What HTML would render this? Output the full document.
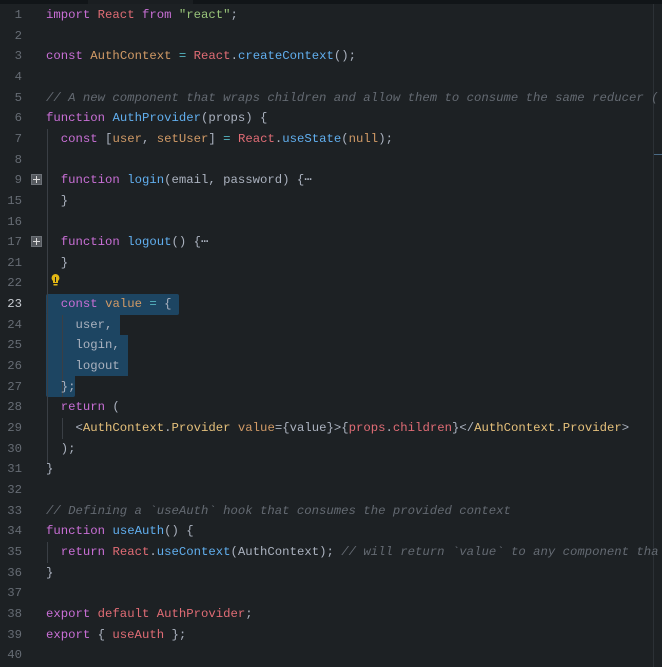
<!DOCTYPE html>
<html><head><style>
html,body{margin:0;padding:0;background:#1d2124;width:662px;height:667px;overflow:hidden}
body{position:relative;font-family:"Liberation Mono","DejaVu Sans Mono",monospace;font-size:12.3px;color:#abb2bf}
.top{position:absolute;left:0;top:0;width:662px;height:4px;background:#111518}
.top2{position:absolute;left:88px;top:0;width:105px;height:4px;background:#1a1e21}
.r{position:absolute;left:0;height:20.65px;line-height:20.65px;white-space:pre;width:662px}
.n{position:absolute;left:0;width:22px;text-align:right;color:#666c74}
.c{position:absolute;left:46px}
.k{color:#c96fd6}.v{color:#e06c75}.o{color:#d19a66}.f{color:#61afef}.s{color:#98c379}.cm{color:#646a72;font-style:italic}.y{color:#e5c07b}.op{color:#56b6c2}
.sel{position:absolute;background:#1d4562}
.g{position:absolute;width:1px;background:#3a3f45}
.fold{position:absolute;left:31px;width:11px;height:11px;background:#55595e;border:1px solid #6d7278;box-sizing:border-box}
.fold:before{content:"";position:absolute;left:1px;top:4px;width:7px;height:1px;background:#dcdcdc}
.fold:after{content:"";position:absolute;left:4px;top:1px;width:1px;height:7px;background:#dcdcdc}
</style></head><body>
<div class="top"></div><div class="top2"></div>
<div style="position:absolute;left:653px;top:4px;width:1px;height:663px;background:#2c3136"></div>
<div style="position:absolute;left:654px;top:154px;width:8px;height:1px;background:#4a6a85"></div>
<div class="sel" style="left:46px;top:294px;width:133px;height:20.65px;border-radius:2px"></div>
<div class="sel" style="left:46px;top:314px;width:74px;height:21px"></div>
<div class="sel" style="left:46px;top:335px;width:82px;height:41px"></div>
<div class="sel" style="left:46px;top:376px;width:29px;height:21px;border-radius:0 0 2px 2px"></div>
<div class="g" style="left:47px;top:129px;height:335px"></div>
<div class="g" style="left:62px;top:315px;height:82px"></div>
<div class="g" style="left:62px;top:418px;height:21px"></div>
<div class="g" style="left:47px;top:542px;height:21px"></div>
<div class="fold" style="top:174px"></div>
<div class="fold" style="top:236px"></div>
<svg style="position:absolute;left:50px;top:273px" width="11" height="14" viewBox="0 0 11 14"><path d="M5.5 1a4 4 0 0 0-2.5 7v2h5V8a4 4 0 0 0-2.5-7z" fill="#e2b714"/><rect x="3.5" y="11" width="4" height="1.5" fill="#e2b714"/><rect x="5" y="4" width="1" height="5" fill="#1d2124"/></svg>

<div class="r" style="top:5px"><span class="n">1</span><span class="c"><span class="k">import</span> <span class="v">React</span> <span class="k">from</span> <span class="s">"react"</span>;</span></div>
<div class="r" style="top:25.65px"><span class="n">2</span></div>
<div class="r" style="top:46.3px"><span class="n">3</span><span class="c"><span class="k">const</span> <span class="o">AuthContext</span> <span class="op">=</span> <span class="v">React</span>.<span class="f">createContext</span>();</span></div>
<div class="r" style="top:66.95px"><span class="n">4</span></div>
<div class="r" style="top:87.6px"><span class="n">5</span><span class="c cm">// A new component that wraps children and allow them to consume the same reducer (</span></div>
<div class="r" style="top:108.25px"><span class="n">6</span><span class="c"><span class="k">function</span> <span class="f">AuthProvider</span>(props) {</span></div>
<div class="r" style="top:128.9px"><span class="n">7</span><span class="c">  <span class="k">const</span> [<span class="o">user</span>, <span class="o">setUser</span>] <span class="op">=</span> <span class="v">React</span>.<span class="f">useState</span>(<span class="o">null</span>);</span></div>
<div class="r" style="top:149.55px"><span class="n">8</span></div>
<div class="r" style="top:170.2px"><span class="n">9</span><span class="c">  <span class="k">function</span> <span class="f">login</span>(email, password) {⋯</span></div>
<div class="r" style="top:190.85px"><span class="n">15</span><span class="c">  }</span></div>
<div class="r" style="top:211.5px"><span class="n">16</span></div>
<div class="r" style="top:232.15px"><span class="n">17</span><span class="c">  <span class="k">function</span> <span class="f">logout</span>() {⋯</span></div>
<div class="r" style="top:252.8px"><span class="n">21</span><span class="c">  }</span></div>
<div class="r" style="top:273.45px"><span class="n">22</span></div>
<div class="r" style="top:294.1px"><span class="n" style="color:#c8ccd2">23</span><span class="c">  <span class="k">const</span> <span class="o">value</span> <span class="op">=</span> {</span></div>
<div class="r" style="top:314.75px"><span class="n">24</span><span class="c">    user,</span></div>
<div class="r" style="top:335.4px"><span class="n">25</span><span class="c">    login,</span></div>
<div class="r" style="top:356.05px"><span class="n">26</span><span class="c">    logout</span></div>
<div class="r" style="top:376.7px"><span class="n">27</span><span class="c">  };</span></div>
<div class="r" style="top:397.35px"><span class="n">28</span><span class="c">  <span class="k">return</span> (</span></div>
<div class="r" style="top:418px"><span class="n">29</span><span class="c">    &lt;<span class="y">AuthContext</span>.<span class="y">Provider</span> <span class="o">value</span>={value}&gt;{<span class="v">props</span>.<span class="v">children</span>}&lt;/<span class="y">AuthContext</span>.<span class="y">Provider</span>&gt;</span></div>
<div class="r" style="top:438.65px"><span class="n">30</span><span class="c">  );</span></div>
<div class="r" style="top:459.3px"><span class="n">31</span><span class="c">}</span></div>
<div class="r" style="top:479.95px"><span class="n">32</span></div>
<div class="r" style="top:500.6px"><span class="n">33</span><span class="c cm">// Defining a `useAuth` hook that consumes the provided context</span></div>
<div class="r" style="top:521.25px"><span class="n">34</span><span class="c"><span class="k">function</span> <span class="f">useAuth</span>() {</span></div>
<div class="r" style="top:541.9px"><span class="n">35</span><span class="c">  <span class="k">return</span> <span class="v">React</span>.<span class="f">useContext</span>(AuthContext); <span class="cm">// will return `value` to any component tha</span></span></div>
<div class="r" style="top:562.55px"><span class="n">36</span><span class="c">}</span></div>
<div class="r" style="top:583.2px"><span class="n">37</span></div>
<div class="r" style="top:603.85px"><span class="n">38</span><span class="c"><span class="k">export</span> <span class="v">default</span> <span class="v">AuthProvider</span>;</span></div>
<div class="r" style="top:624.5px"><span class="n">39</span><span class="c"><span class="k">export</span> { <span class="v">useAuth</span> };</span></div>
<div class="r" style="top:645.15px"><span class="n">40</span></div>
</body></html>
